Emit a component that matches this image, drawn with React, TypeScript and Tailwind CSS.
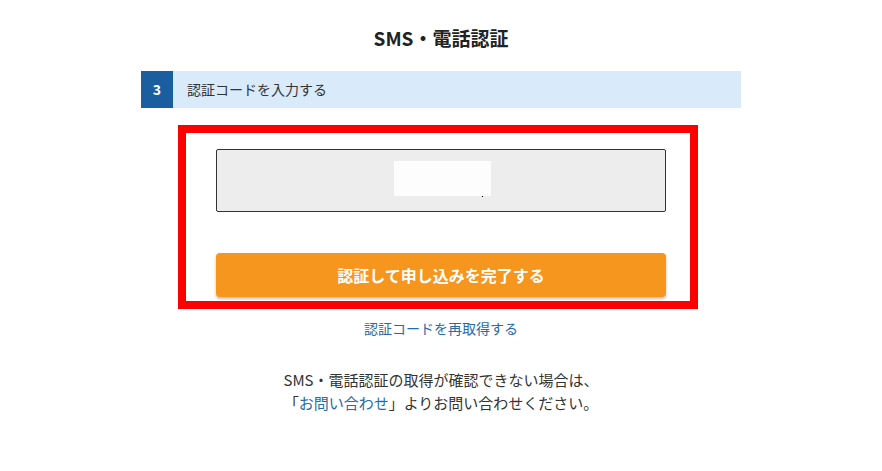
export default function App() {
  const font = { fontFamily: '"Noto Sans CJK JP", "Noto Sans", sans-serif' };
  return (
    <div className="w-[882px] h-[471px] bg-white text-[#333333]" style={font}>
      <div className="w-[600px] ml-[141px] pt-[26px]">
        <h1 className="text-center text-[19px] leading-[24px] font-bold text-[#222222]">SMS・電話認証</h1>

        {/* step header */}
        <div className="mt-[21px] flex h-[37px] bg-[#d9eafb]">
          <div className="w-[32px] flex items-center justify-center bg-[#1b5e9f] text-white text-[14px] font-bold">3</div>
          <div className="pl-[14px] flex items-center text-[14px] text-[#333333]">認証コードを入力する</div>
        </div>

        {/* highlighted form */}
        <div className="ml-[37px] mt-[17px] w-[520px] border-[8px] border-[#ff0000] pt-[16px] pb-[4px] pl-[30px]">
          <div className="w-[450px] h-[63px] border border-[#333333] rounded-[2px] bg-[#ededed] flex items-start justify-center">
            <div className="relative mt-[11px] ml-[3px] w-[97px] h-[35px] bg-[#fefdfd]">
              <div className="absolute right-[8px] bottom-[-1px] w-[1px] h-[1px] bg-black" />
            </div>
          </div>
          <button className="mt-[41px] w-[450px] h-[44px] rounded-[4px] bg-[#f7961f] text-white text-[16px] font-bold shadow-[0_2px_3px_rgba(0,0,0,0.25)]">
            認証して申し込みを完了する
          </button>
        </div>

        <div className="mt-[9px] text-center text-[14px] leading-[20px]">
          <a className="text-[#2a6aa6]">認証コードを再取得する</a>
        </div>

        <div className="mt-[30px] text-center text-[15px] leading-[23px] text-[#333333]">
          <p>SMS・電話認証の取得が確認できない場合は、</p>
          <p>
            「<a className="text-[#2a6aa6]">お問い合わせ</a>」よりお問い合わせください。
          </p>
        </div>
      </div>
    </div>
  );
}
